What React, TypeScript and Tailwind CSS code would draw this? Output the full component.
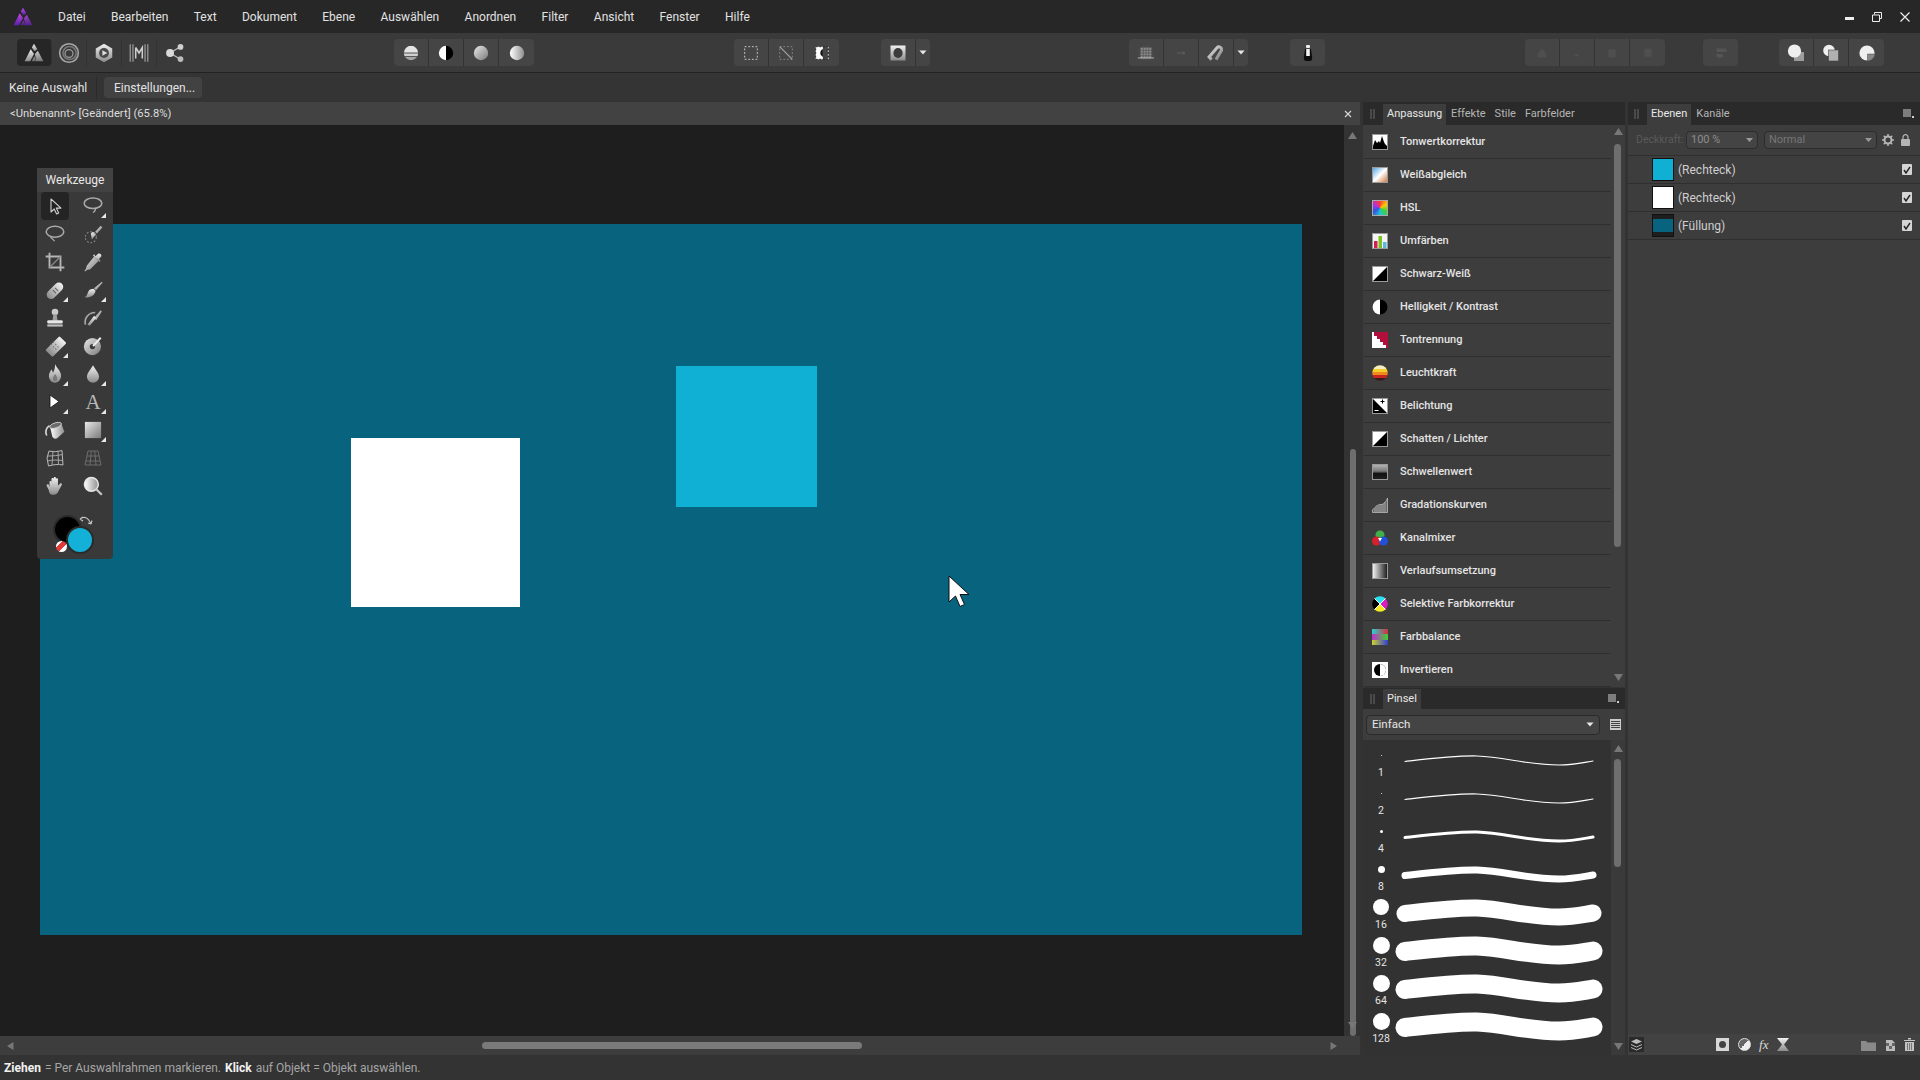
import React from 'react';

type Kids = { children?: React.ReactNode };

const Ico = ({ s = 20, children }: Kids & { s?: number }) => (
  <svg width={s} height={s} viewBox="0 0 20 20" className="block">
    {children}
  </svg>
);

const Sq = ({ children }: Kids) => (
  <svg width="16" height="16" viewBox="0 0 16 16" className="block">
    {children}
  </svg>
);

const Defs = () => (
  <svg className="absolute w-0 h-0">
    <defs>
      <linearGradient id="gv" x1="0" y1="0" x2="0" y2="1">
        <stop offset="0" stopColor="#f2f2f2" />
        <stop offset="1" stopColor="#8a8a8a" />
      </linearGradient>
      <linearGradient id="gd" x1="0" y1="0" x2="1" y2="1">
        <stop offset="0" stopColor="#e8e8e8" />
        <stop offset="1" stopColor="#7a7a7a" />
      </linearGradient>
      <linearGradient id="gh" x1="0" y1="0" x2="1" y2="0">
        <stop offset="0" stopColor="#ffffff" />
        <stop offset="1" stopColor="#8f8f8f" />
      </linearGradient>
      <linearGradient id="wb" x1="0" y1="0" x2="1" y2="1">
        <stop offset="0" stopColor="#3d9be0" />
        <stop offset="0.5" stopColor="#ffffff" />
        <stop offset="1" stopColor="#c96a28" />
      </linearGradient>
      <linearGradient id="bw" x1="0" y1="0" x2="1" y2="0">
        <stop offset="0" stopColor="#ffffff" />
        <stop offset="1" stopColor="#111111" />
      </linearGradient>
      <linearGradient id="th" x1="0" y1="0" x2="0" y2="1">
        <stop offset="0" stopColor="#bdbdbd" />
        <stop offset="0.45" stopColor="#777777" />
        <stop offset="0.6" stopColor="#111111" />
        <stop offset="1" stopColor="#222222" />
      </linearGradient>
      <linearGradient id="pu" x1="0" y1="0" x2="0" y2="1">
        <stop offset="0" stopColor="#c04be8" />
        <stop offset="1" stopColor="#5a1fa8" />
      </linearGradient>
    </defs>
  </svg>
);

// top toolbar ------------------------------------------------------------

const Btn = ({ children, w = 35, on }: Kids & { w?: number; on?: boolean }) => (
  <div
    className={`flex items-center justify-center h-[27px] border-r border-[#333] last:border-r-0 ${on ? 'bg-[#262626] rounded-sm' : ''}`}
    style={{ width: w }}
  >
    {children}
  </div>
);

const Group = ({ ml, children, plain }: Kids & { ml: number; plain?: boolean }) => (
  <div className={`flex rounded-sm ${plain ? '' : 'bg-[#454545]'}`} style={{ marginLeft: ml }}>
    {children}
  </div>
);

const Caret = () => (
  <svg width="8" height="5" viewBox="0 0 8 5">
    <path d="M0.5 0.5h7L4 4.5z" fill="#e6e6e6" />
  </svg>
);

const AffinityMark = ({ fill }: { fill: string }) => (
  <Ico s={22}>
    <path d="M10 1.5 13 6.5 10.5 8.5 8 5z" fill={fill} />
    <path d="M7 6.5 10 11 6.5 17.5H1.5z" fill={fill} />
    <path d="M13.5 8 18.5 17.5H12L10.8 11z" fill={fill} opacity="0.8" />
    <path d="M7.8 17.5 10.3 13 12 17.5z" fill={fill} opacity="0.6" />
  </Ico>
);

const TopBar = () => (
  <div className="flex items-center h-[40px] bg-[#3a3a3a] border-b border-[#222] shrink-0">
    <div className="flex ml-[17px] w-[180px]">
      <Btn on><AffinityMark fill="url(#gv)" /></Btn>
      <Btn>
        <Ico s={22}>
          <circle cx="10" cy="10" r="8.5" fill="none" stroke="#a8a8a8" strokeWidth="1.4" />
          <circle cx="10.5" cy="10" r="6" fill="none" stroke="#777" strokeWidth="1.4" />
          <circle cx="10" cy="10.5" r="3.6" fill="none" stroke="#999" strokeWidth="1.2" />
        </Ico>
      </Btn>
      <Btn>
        <Ico s={22}>
          <path d="M10 1.5 17.5 5.8V14.2L10 18.5 2.5 14.2V5.8z" fill="url(#gv)" />
          <circle cx="10" cy="10" r="4.5" fill="#4a4a4a" />
          <path d="M8.5 7.5 13 10 8.5 12.5z" fill="#ddd" />
        </Ico>
      </Btn>
      <Btn>
        <Ico s={22}>
          <path d="M2 2v16M4.5 2v16M15.5 2v16M18 2v16" stroke="#a5a5a5" strokeWidth="1" />
          <path d="M7 5 10 10 13 5v10M7 5v10" fill="none" stroke="#cfcfcf" strokeWidth="1.4" />
        </Ico>
      </Btn>
      <Btn>
        <Ico s={22}>
          <path d="M5.5 10 14.5 4.5M5.5 10 14.5 15.5" stroke="#bbb" strokeWidth="1.2" />
          <circle cx="5.5" cy="10" r="3.6" fill="#d9d9d9" />
          <circle cx="15" cy="4.5" r="2.6" fill="#cfcfcf" />
          <circle cx="15" cy="15.5" r="2.6" fill="#bdbdbd" />
        </Ico>
      </Btn>
    </div>
    <Group ml={197}>
      <Btn>
        <Ico s={18}>
          <clipPath id="c1"><circle cx="10" cy="10" r="8" /></clipPath>
          <g clipPath="url(#c1)">
            <rect width="20" height="7.5" y="2" fill="#e4e4e4" />
            <rect width="20" height="3" y="10.5" fill="#d0d0d0" />
            <rect width="20" height="4" y="14.5" fill="#a8a8a8" />
          </g>
        </Ico>
      </Btn>
      <Btn>
        <Ico s={18}>
          <circle cx="10" cy="10" r="8" fill="#000" />
          <path d="M10 2a8 8 0 0 0 0 16z" fill="#fff" />
        </Ico>
      </Btn>
      <Btn>
        <Ico s={18}><circle cx="10" cy="10" r="8" fill="url(#gd)" /></Ico>
      </Btn>
      <Btn>
        <Ico s={18}><circle cx="10" cy="10" r="8" fill="url(#gh)" /></Ico>
      </Btn>
    </Group>
    <Group ml={200}>
      <Btn>
        <Ico s={18}><rect x="3" y="3" width="14" height="14" fill="none" stroke="#d8d8d8" strokeDasharray="2 2" /></Ico>
      </Btn>
      <Btn>
        <Ico s={18}>
          <rect x="3" y="3" width="14" height="14" fill="none" stroke="#8a8a8a" strokeDasharray="2 2" />
          <path d="M3 3 17 17" stroke="#a5a5a5" strokeWidth="1.3" />
        </Ico>
      </Btn>
      <Btn>
        <Ico s={18}>
          <rect x="3" y="3" width="8" height="14" fill="#fff" />
          <rect x="3" y="3" width="14" height="14" fill="none" stroke="#1f1f1f" strokeDasharray="2 2" />
          <path d="M11 5.5a5 5 0 0 0-3 4.5 5 5 0 0 0 3 4.5z" fill="#111" />
          <path d="M17 3v14" stroke="#ddd" strokeDasharray="2 2" />
        </Ico>
      </Btn>
    </Group>
    <Group ml={42}>
      <Btn>
        <Ico s={20}>
          <rect x="2.5" y="2.5" width="15" height="15" fill="url(#gv)" />
          <ellipse cx="10" cy="10" rx="4.6" ry="5" fill="#3c3c3c" />
        </Ico>
      </Btn>
      <Btn w={14}><Caret /></Btn>
    </Group>
    <Group ml={199}>
      <Btn>
        <Ico s={18}>
          <rect x="4" y="4" width="12" height="12" fill="#8b8b8b" />
          <path d="M7 1.5v17M10 1.5v17M13 1.5v17M1.5 7h17M1.5 10h17M1.5 13h17" stroke="#555" strokeWidth="0.8" />
          <path d="M1 15.5h18" stroke="#bbb" />
        </Ico>
      </Btn>
      <Btn>
        <Ico s={16}><path d="M5 10h10M12 8l3 2-3 2" fill="none" stroke="#5e5e5e" strokeWidth="1.2" /></Ico>
      </Btn>
      <Btn>
        <Ico s={22}>
          <path d="M6 16 3.8 13.6 11 5.2c1.5-1.7 4.5-.2 4 2.4L10 16" fill="none" stroke="url(#gd)" strokeWidth="2.8" />
        </Ico>
      </Btn>
      <Btn w={14}><Caret /></Btn>
    </Group>
    <Group ml={42}>
      <Btn>
        <Ico s={20}>
          <path d="M7 6h6l1.2 9c0 2-1.2 3-2.2 3H8c-1 0-2.2-1-2.2-3z" fill="#0c0c0c" />
          <rect x="8" y="2" width="4" height="3" rx="1" fill="#eee" />
          <rect x="8.2" y="6" width="3.6" height="7" fill="#f2f2f2" />
        </Ico>
      </Btn>
    </Group>
    <Group ml={200}>
      {[
        'M10 5l5 6v4H5v-4z',
        'M12 6v8H6l3-3h3z',
        'M6 6h8v9H6z',
        'M6 5h8v9H6z',
      ].map((d) => (
        <Btn key={d}>
          <Ico s={18}><path d={d} fill="#4f4f4f" /></Ico>
        </Btn>
      ))}
    </Group>
    <Group ml={38}>
      <Btn>
        <Ico s={18}><path d="M5 5h11v4H5zM5 11h7v4H5z" fill="#555" /></Ico>
      </Btn>
    </Group>
    <Group ml={41}>
      <Btn>
        <Ico s={20}>
          <rect x="8" y="9" width="10" height="9" fill="#9c9c9c" />
          <circle cx="8.5" cy="8" r="6.6" fill="#efefef" />
        </Ico>
      </Btn>
      <Btn>
        <Ico s={20}>
          <circle cx="8" cy="7.5" r="5.8" fill="#efefef" />
          <rect x="7.5" y="7" width="10" height="11" fill="#b0b0b0" stroke="#444" strokeWidth="0.6" />
        </Ico>
      </Btn>
      <Btn>
        <Ico s={20}>
          <circle cx="10" cy="10" r="7.6" fill="#efefef" />
          <path d="M10.5 11H18c-.3 3.8-3.3 6.8-7.5 7z" fill="#888" stroke="#444" strokeWidth="0.5" />
        </Ico>
      </Btn>
    </Group>
  </div>
);

// canvas -----------------------------------------------------------------

type ToolDef = { el: React.ReactNode; corner?: boolean; on?: boolean };

const tools: ToolDef[] = [
  { on: true, el: <Ico><path d="M6 3v13l3.2-3 2.4 5 2.1-1-2.4-4.9H16z" fill="#222" stroke="#cfcfcf" strokeWidth="1.1" strokeLinejoin="round" /></Ico> },
  { corner: true, el: <Ico s={22}><ellipse cx="10" cy="7.5" rx="8" ry="4.8" fill="none" stroke="#a9a9a9" strokeWidth="1.4" /><path d="M12 12c1 2-1 3-2 4" fill="none" stroke="#a9a9a9" strokeWidth="1.2" /></Ico> },
  { el: <Ico s={22}><ellipse cx="10" cy="8" rx="8" ry="5" fill="none" stroke="#a9a9a9" strokeWidth="1.4" /><path d="M6 12.5c.5 2 2.5 2 3.5 4" fill="none" stroke="#a9a9a9" strokeWidth="1.2" /></Ico> },
  { el: <Ico s={22}><path d="M12 8 17 2.5l1.5 1.5-5 5.5z" fill="url(#gd)" /><path d="M8 9.5c2-2 4-1.5 4.5 1L9 15z" fill="url(#gv)" /><circle cx="8" cy="13" r="5" fill="none" stroke="#888" strokeDasharray="1.6 1.6" /></Ico> },
  { el: <Ico s={22}><path d="M5 1.5V15h13.5M1.5 5H15v13.5" fill="none" stroke="#b5b5b5" strokeWidth="1.7" /><path d="M5 15 15 5" stroke="#8a8a8a" strokeWidth="1.1" /></Ico> },
  { el: <Ico s={22}><path d="M11 5l4 4-7.5 7.5-3 .8-1.6 1.3-.7-.7 1.3-1.6.8-3z" fill="url(#gd)" /><path d="M10 4l6 6 1-1-1.6-1.6 2-2.4c1-1.5-1.4-3.6-3-2.2l-2.2 2L11 3z" fill="url(#gv)" /></Ico> },
  { corner: true, el: <Ico s={22}><rect x="0" y="0" width="8" height="18" rx="4" transform="translate(13.5 1.5) rotate(45)" fill="url(#gv)" /><path d="M8 10l3 3M10 8l3 3" stroke="#666" /></Ico> },
  { corner: true, el: <Ico s={22}><path d="M11 8.5 18 2.5l.7.8-6 7z" fill="url(#gd)" /><path d="M10.5 8.8l1.8 1.8c-.6 4.2-5 6.8-10.3 6 3-1 2.8-3.6 4-5.7 1-1.5 2.6-2 4.5-2.1z" fill="url(#gv)" /></Ico> },
  { el: <Ico s={22}><circle cx="10" cy="4.5" r="3" fill="#c9c9c9" /><path d="M8.5 6.5h3l.8 6h-4.6z" fill="#9e9e9e" /><rect x="3" y="12" width="14" height="3" rx="1" fill="#e6e6e6" /><rect x="3" y="15.8" width="14" height="2" fill="#bdbdbd" /></Ico> },
  { el: <Ico s={22}><path d="M3 16c-1-6 3-11 9-11" fill="none" stroke="#a8a8a8" strokeWidth="1.5" /><path d="M11 10l6-7 1 1-5 8z" fill="url(#gd)" /><path d="M5 16l6-8 2 2-6 7z" fill="url(#gv)" /></Ico> },
  { corner: true, el: <Ico s={22}><rect x="0" y="0" width="9" height="18" rx="1" transform="translate(14 1) rotate(45)" fill="url(#gv)" /><path d="M6 8l6 6M8 6l6 6" stroke="#777" strokeDasharray="1.5 1.5" /></Ico> },
  { el: <Ico s={22}><circle cx="9.500" cy="10.500" r="7.800" fill="url(#gd)" /><circle cx="9.500" cy="10.500" r="2.400" fill="#3a3a3a" /><path d="M10 10l7-7.500" stroke="#ededed" strokeWidth="1.800" /></Ico> },
  { corner: true, el: <Ico s={22}><path d="M10 1c1 3 5 5.500 5.500 10 .3 4-2.500 7-5.500 7S4 15 4.500 11c.2-2 1.500-3 2-5 1 .8 1.500 2 1.500 3 1.500-2 2.300-5 2-8z" fill="url(#gv)" /><path d="M10 10c1.500 2 2.500 3.500 1.800 5.500-.5 1.200-3 1.200-3.600 0C7.500 13.500 9 12 10 10z" fill="#7a7a7a" /></Ico> },
  { corner: true, el: <Ico s={22}><path d="M10 2c2 4 5.500 7 5.500 10.500A5.500 5.500 0 0 1 10 18a5.500 5.500 0 0 1-5.500-5.500C4.500 9 8 6 10 2z" fill="url(#gv)" /></Ico> },
  { corner: true, el: <Ico><path d="M5 3v13l9-6.500z" fill="#fff" stroke="#111" strokeWidth="0.800" /></Ico> },
  { corner: true, el: <span className="block text-[21px] leading-[20px] text-[#b8b8b8] font-['Liberation_Serif',serif]">A</span> },
  { el: <Ico s={22}><path d="M5.500 7 15.500 3.500 18.500 11.500 12 17.500c-2 1-3.800.2-4.500-1.800z" fill="url(#gh)" /><ellipse cx="10.500" cy="5.800" rx="5.500" ry="2.300" transform="rotate(-18 10.500 5.800)" fill="#6a6a6a" stroke="#ddd" strokeWidth="0.700" /><path d="M5 6c-3.500 2-4 6-2.500 9" fill="none" stroke="#ddd" strokeWidth="1.500" /></Ico> },
  { corner: true, el: <Ico s={18}><rect x="1" y="1" width="18" height="18" fill="url(#gd)" /></Ico> },
  { el: <Ico s={20}><path d="M4 3c4 1 8 1 13-.5l1 14.500c-5-1-9-.5-14.500 1L2 10z" fill="none" stroke="#b9b9b9" /><path d="M3 8c5 0 10-.5 14.500-1.500M2.500 13c5-1.500 10-1 15.500-.5M8 2.800 7 17M13 2.500l.5 14.500" fill="none" stroke="#a5a5a5" /></Ico> },
  { el: <Ico s={20}><path d="M5 3h10l3 14H2zM3.800 8h12.400M2.800 13h14.400M8.300 3 7 17M11.700 3 13 17" fill="none" stroke="#6c6c6c" /></Ico> },
  { el: <Ico s={22}><path d="M5 11V6.500c0-1.300 1.800-1.300 1.800 0V3.800c0-1.300 2-1.300 2 0v-1c0-1.300 2-1.300 2 0v1c0-1.200 1.900-1.200 1.900 0v6l1.800-1.800c1-1 2.300 0 1.600 1L12.500 16c-1 1.500-2 2-4 2-3 0-4-2-4-4L2.500 10c-.7-1.400 1-2.200 1.800-1.200z" fill="url(#gv)" /></Ico> },
  { el: <Ico s={22}><circle cx="8.500" cy="8.500" r="6.300" fill="url(#gh)" stroke="#e6e6e6" strokeWidth="1.400" /><path d="M13 13l5 5" stroke="#c8c8c8" strokeWidth="2" /></Ico> },
];

const ToolsPanel = () => (
  <div className="absolute left-[37px] top-[43px] w-[76px] h-[391px] bg-[#393939] rounded-b-sm z-10">
    <div className="h-[24px] flex items-center justify-center bg-[#424242] text-[12px] text-[#e8e8e8]">Werkzeuge</div>
    <div className="grid grid-cols-[28px_28px] gap-x-[10px] pl-[4px]">
      {tools.map((t, i) => (
        <div key={i} className={`relative flex items-center justify-center w-[28px] h-[28px] rounded-sm ${t.on ? 'bg-[#242424]' : ''}`}>
          {t.el}
          {t.corner && <div className="absolute right-[1px] bottom-[2px] w-0 h-0 border-l-[5px] border-l-transparent border-b-[5px] border-b-[#e8e8e8]" />}
        </div>
      ))}
    </div>
    <div className="relative h-[60px]">
      <div className="absolute left-[16px] top-[15px] w-[29px] h-[29px] rounded-full bg-black border-2 border-[#2b2b2b]" />
      <div className="absolute left-[29px] top-[26px] w-[28px] h-[28px] rounded-full bg-[#13b1d8] border-2 border-[#2b2b2b]" />
      <div className="absolute left-[19px] top-[41px] w-[11px] h-[11px] rounded-full bg-[linear-gradient(135deg,#fff_30%,#e03a3a_30%,#e03a3a_60%,#fff_60%)]" />
      <svg className="absolute left-[42px] top-[15px]" width="14" height="14" viewBox="0 0 14 14">
        <path d="M1 4c4-3 8-2 11 5M1 4l3-2M1 4l3 2M12 9l1-3.500M12 9l-3-1" fill="none" stroke="#c8c8c8" strokeWidth="1.100" />
      </svg>
    </div>
  </div>
);

const DocCanvas = () => (
  <div className="relative flex-1 bg-[#1e1e1e] overflow-hidden">
    <div className="absolute left-[40px] top-[99px] w-[1262px] h-[711px] bg-[#07637e]" />
    <div className="absolute left-[351px] top-[313px] w-[169px] h-[169px] bg-white" />
    <div className="absolute left-[676px] top-[241px] w-[141px] h-[141px] bg-[#10b0d4]" />
    <ToolsPanel />
    <svg className="absolute left-[947px] top-[450px]" width="24" height="34" viewBox="0 0 24 34">
      <path d="M2 1v26l6.500-6 4.500 10.500 4.500-2L13 19.500h9z" fill="#fff" stroke="#111" strokeWidth="1" />
    </svg>
  </div>
);

const ScrollArrow = ({ up, cls }: { up?: boolean; cls?: string }) => (
  <svg className={cls} width="9" height="7" viewBox="0 0 9 7">
    <path d={up ? 'M0 7h9L4.500 0z' : 'M0 0h9L4.500 7z'} fill="#777" />
  </svg>
);

const DocArea = () => (
  <div className="flex flex-col w-[1360px] shrink-0">
    <div className="flex items-center h-[23px] bg-[#424242] pl-[10px] pr-[8px] justify-between">
      <span className="pt-[1px] text-[11.25px] text-[#dcdcdc]">&lt;Unbenannt&gt; [Geändert] (65.8%)</span>
      <svg width="8" height="8" viewBox="0 0 8 8"><path d="M1 1l6 6M7 1 1 7" stroke="#d8d8d8" strokeWidth="1.100" /></svg>
    </div>
    <div className="flex flex-1">
      <div className="flex flex-col flex-1">
        <DocCanvas />
      </div>
      <div className="relative w-[16px] bg-[#333]">
        <ScrollArrow up cls="absolute left-[4px] top-[7px]" />
        <div className="absolute left-[6px] top-[324px] w-[6px] h-[587px] rounded bg-[#6e6e6e]" />
        <ScrollArrow cls="absolute left-[4px] bottom-[7px]" />
      </div>
    </div>
    <div className="relative h-[19px] bg-[#3d3d3d]">
      <svg className="absolute left-[7px] top-[6px]" width="7" height="8" viewBox="0 0 7 8"><path d="M6.500 0v8L0 4z" fill="#777" /></svg>
      <div className="absolute left-[482px] top-[6px] w-[380px] h-[7px] rounded-full bg-[#7a7a7a]" />
      <svg className="absolute left-[1330px] top-[6px]" width="7" height="8" viewBox="0 0 7 8"><path d="M.5 0v8L7 4z" fill="#777" /></svg>
    </div>
  </div>
);

// adjustments ------------------------------------------------------------

const Frame = ({ children }: Kids) => (
  <>
    {children}
    <rect x="0.5" y="0.5" width="15" height="15" fill="none" stroke="#9a9a9a" />
  </>
);

const adjustments: { name: string; icon: React.ReactNode }[] = [
  { name: 'Tonwertkorrektur', icon: <Sq><Frame><rect width="16" height="16" fill="#fff" /><path d="M1 15V12l2-6 2 3 2-2 1 2 2-7 2 6 1 2 2 2v3z" fill="#000" /></Frame></Sq> },
  { name: 'Weißabgleich', icon: <Sq><Frame><rect width="16" height="16" fill="url(#wb)" /></Frame></Sq> },
  { name: 'HSL', icon: <div className="w-4 h-4 border border-[#aaa] bg-[conic-gradient(#ff3b30,#ffcc00,#3bd33b,#22c4d8,#2f55e0,#b52fe0,#ff3b30)]" /> },
  { name: 'Umfärben', icon: <Sq><Frame><rect width="16" height="16" fill="#f4f4f4" /><rect x="2" y="8" width="3.500" height="7" fill="#d21f4f" /><rect x="6.500" y="3" width="3.500" height="12" fill="#7ac21e" /><rect x="11" y="9" width="3.500" height="6" fill="#5ab7e0" /></Frame></Sq> },
  { name: 'Schwarz-Weiß', icon: <Sq><Frame><rect width="16" height="16" fill="#fff" /><path d="M16 0v16H0z" fill="#000" /></Frame></Sq> },
  { name: 'Helligkeit / Kontrast', icon: <Sq><circle cx="8" cy="8" r="7.500" fill="#000" /><path d="M8 .5a7.500 7.500 0 0 0 0 15z" fill="#fff" /></Sq> },
  { name: 'Tontrennung', icon: <Sq><rect width="16" height="16" fill="#fff" /><path d="M0 0h16v16h-2v-3h-3v-3H8V7H5V4H2V0z" fill="#b20f3c" /></Sq> },
  { name: 'Leuchtkraft', icon: <Sq><clipPath id="lk"><circle cx="8" cy="8" r="7.800" /></clipPath><g clipPath="url(#lk)"><rect width="16" height="4" fill="#f6edc0" /><rect y="4" width="16" height="3" fill="#f4cf2b" /><rect y="7" width="16" height="3" fill="#ee8a1f" /><rect y="10" width="16" height="3" fill="#c9261e" /><rect y="13" width="16" height="3" fill="#3a1a1a" /></g></Sq> },
  { name: 'Belichtung', icon: <Sq><Frame><rect width="16" height="16" fill="#000" /><path d="M0 0h16v16z" fill="#fff" /><path d="M10.500 1.500v4M8.500 3.500h4" stroke="#000" /><path d="M2.500 12.500h4" stroke="#fff" /></Frame></Sq> },
  { name: 'Schatten / Lichter', icon: <Sq><Frame><rect width="16" height="16" fill="#fff" /><path d="M16 0v16H0z" fill="#000" /></Frame></Sq> },
  { name: 'Schwellenwert', icon: <Sq><Frame><rect width="16" height="16" fill="url(#th)" /></Frame></Sq> },
  { name: 'Gradationskurven', icon: <Sq><path d="M0.500 15.500V13C4 9 6 7.500 9 7.500c3 0 5-3 6.500-6.500V15.500z" fill="#666" stroke="#bdbdbd" strokeWidth="0.800" /><path d="M3 15V11M5 15V9.500M7 15V8.500M9 15V8M11 15V7M13 15V5" stroke="#bdbdbd" strokeWidth="0.700" /></Sq> },
  { name: 'Kanalmixer', icon: <Sq><circle cx="8" cy="5" r="4.500" fill="#3fb04a" /><circle cx="4.500" cy="11" r="4.500" fill="#d8202a" /><circle cx="11.500" cy="11" r="4.500" fill="#2350d8" /><path d="M6 8h4l-2 3.500z" fill="#fff" /></Sq> },
  { name: 'Verlaufsumsetzung', icon: <Sq><Frame><rect width="16" height="16" fill="url(#bw)" /></Frame></Sq> },
  { name: 'Selektive Farbkorrektur', icon: <Sq><clipPath id="sf"><circle cx="8" cy="8" r="7.800" /></clipPath><g clipPath="url(#sf)"><path d="M0 0h16L8 8z" fill="#28e2ee" /><path d="M16 0v16L8 8z" fill="#d51fc0" /><path d="M16 16H0l8-8z" fill="#f5ea1f" /><path d="M0 16V0l8 8z" fill="#000" /><path d="M2 2l12 12M14 2 2 14" stroke="#fff" strokeWidth="1" /></g></Sq> },
  { name: 'Farbbalance', icon: <div className="w-4 h-4 flex flex-col"><div className="h-[5px] bg-[linear-gradient(90deg,#2fd0d0,#d02f3f)]" /><div className="h-[6px] bg-[linear-gradient(90deg,#c02fd0,#3fd02f)]" /><div className="h-[5px] bg-[linear-gradient(90deg,#d0d02f,#2f3fd0)]" /></div> },
  { name: 'Invertieren', icon: <Sq><rect width="16" height="16" fill="#fff" /><circle cx="8" cy="8" r="6" fill="#000" /><path d="M8 2a6 6 0 0 1 0 12z" fill="#fff" /></Sq> },
];

const Tab = ({ on, children }: Kids & { on?: boolean }) => (
  <div className={`flex items-center h-[21px] mt-[2px] px-[4px] text-[11px] ${on ? 'bg-[#3d3d3d] text-[#e8e8e8]' : 'text-[#b5b5b5]'}`}>
    {children}
  </div>
);

const Grip = () => (
  <svg className="mx-[5px] shrink-0" width="5" height="10" viewBox="0 0 5 10">
    <path d="M1 0v10M4 0v10" stroke="#6a6a6a" />
  </svg>
);

const MenuIcon = () => (
  <svg width="11" height="9" viewBox="0 0 11 9">
    <path d="M0 1h8M0 3h8M0 5h8M0 7h8" stroke="#d0d0d0" />
    <path d="M9 7h2v2H9z" fill="#d0d0d0" />
  </svg>
);

const AdjustPanel = () => (
  <div className="flex flex-col h-[584px] shrink-0">
    <div className="flex items-center h-[23px] bg-[#2a2a2a] pl-[2px] shrink-0">
      <Grip />
      <div className="flex gap-[1px] ml-[3px]">
        <Tab on>Anpassung</Tab>
        <Tab>Effekte</Tab>
        <Tab>Stile</Tab>
        <Tab>Farbfelder</Tab>
      </div>
    </div>
    <div className="flex flex-1 bg-[#3d3d3d]">
      <div className="flex-1 pt-[1px]">
        {adjustments.map((a) => (
          <div key={a.name} className="flex items-center h-[33px] border-b border-[#2f2f2f] ml-[1px] pl-[8px]">
            <div className="w-[16px] h-[16px] shrink-0">{a.icon}</div>
            <span className="ml-[12px] text-[11px] font-medium text-[#e4e4e4]">{a.name}</span>
          </div>
        ))}
      </div>
      <div className="relative w-[14px]">
        <ScrollArrow up cls="absolute left-[3px] top-[3px]" />
        <div className="absolute left-[3px] top-[19px] w-[7px] h-[403px] rounded bg-[#6e6e6e]" />
        <ScrollArrow cls="absolute left-[3px] bottom-[6px]" />
      </div>
    </div>
  </div>
);

// brushes ----------------------------------------------------------------

const brushes: [string, number, number][] = [
  ['1', 1, 1.200],
  ['2', 1, 1.200],
  ['4', 3, 3],
  ['8', 7, 7],
  ['16', 16, 17],
  ['32', 17, 19],
  ['64', 17, 19],
  ['128', 17, 19],
];

const BrushPanel = () => (
  <div className="flex flex-col flex-1 mt-[2px] min-h-0">
    <div className="flex items-center justify-between h-[21px] bg-[#2a2a2a] pl-[2px] pr-[6px] shrink-0">
      <div className="flex items-center">
        <Grip />
        <div className="ml-[3px]"><Tab on>Pinsel</Tab></div>
      </div>
      <MenuIcon />
    </div>
    <div className="flex items-center h-[31px] bg-[#3d3d3d] pl-[3px] pr-[2px] shrink-0">
      <div className="flex items-center justify-between w-[234px] h-[20px] px-[5px] bg-[#444] border border-[#2a2a2a] rounded-sm text-[11.5px] text-[#e6e6e6]">
        <span>Einfach</span>
        <Caret />
      </div>
      <div className="ml-[10px] w-[11px] h-[11px] border border-[#ccc] bg-[repeating-linear-gradient(180deg,#ccc_0,#ccc_1px,#444_1px,#444_2px)]" />
    </div>
    <div className="flex flex-1 bg-[#323232]">
      <div className="flex-1">
        {brushes.map(([label, dot, sw]) => (
          <div key={label} className="relative flex h-[38px]">
            <div className="w-[36px] flex flex-col items-center pt-[2px]">
              <div className="h-[26px] flex items-center justify-center">
                <div className="rounded-full bg-white" style={{ width: dot, height: dot }} />
              </div>
              <div className="h-[10px] leading-[10px] text-[10.5px] text-[#e4e4e4]">{label}</div>
            </div>
            <svg width="210" height="38" viewBox="0 0 210 38" className="absolute left-[30px] top-[0px]">
              <path
                d="M12 21.500C38 18.500 62 15.500 84 16c28 1 50 9 82 9 14 0 22-2 34-4"
                fill="none"
                stroke="#fff"
                strokeWidth={sw}
                strokeLinecap="round"
              />
            </svg>
          </div>
        ))}
      </div>
      <div className="relative w-[14px] bg-[#3a3a3a]">
        <ScrollArrow up cls="absolute left-[3px] top-[5px]" />
        <div className="absolute left-[3px] top-[19px] w-[7px] h-[108px] rounded bg-[#6e6e6e]" />
        <ScrollArrow cls="absolute left-[3px] bottom-[5px]" />
      </div>
    </div>
  </div>
);

// layers -----------------------------------------------------------------

const Check = () => (
  <div className="flex items-center justify-center w-[10px] h-[11px] bg-[#d4d4d4] rounded-[1px]">
    <svg width="8" height="8" viewBox="0 0 8 8"><path d="M1 4l2 3 4-6" fill="none" stroke="#222" strokeWidth="1.400" /></svg>
  </div>
);

const LayerRow = ({ name, swatch }: { name: string; swatch: React.ReactNode }) => (
  <div className="flex items-center h-[28px] border-b border-[#2f2f2f] pl-[24px] pr-[8px]">
    <div className="w-[22px] h-[23px] border border-[#111] shrink-0 overflow-hidden">{swatch}</div>
    <span className="ml-[4px] flex-1 text-[12px] text-[#cfcfcf]">{name}</span>
    <Check />
  </div>
);

const LayersPanel = () => (
  <div className="flex flex-col flex-1 ml-[3px] bg-[#3d3d3d]">
    <div className="flex items-center justify-between h-[23px] bg-[#2a2a2a] pl-[1px] pr-[6px] shrink-0">
      <div className="flex items-center">
        <Grip />
        <div className="flex gap-[1px] ml-[3px]">
          <Tab on>Ebenen</Tab>
          <Tab>Kanäle</Tab>
        </div>
      </div>
      <MenuIcon />
    </div>
    <div className="flex items-center h-[31px] pl-[8px] border-b border-[#2f2f2f]">
      <span className="w-[50px] text-[10.5px] text-[#5a5a5a]">Deckkraft:</span>
      <div className="flex items-center justify-between w-[72px] h-[18px] px-[4px] bg-[#444] border border-[#2c2c2c] rounded-sm text-[11px] text-[#8c8c8c]">
        <span>100 %</span>
        <svg width="7" height="4" viewBox="0 0 7 4"><path d="M0 0h7L3.500 4z" fill="#999" /></svg>
      </div>
      <div className="flex items-center justify-between w-[113px] h-[18px] ml-[6px] px-[4px] bg-[#444] border border-[#2c2c2c] rounded-sm text-[11px] text-[#777]">
        <span>Normal</span>
        <svg width="7" height="4" viewBox="0 0 7 4"><path d="M0 0h7L3.500 4z" fill="#999" /></svg>
      </div>
      <svg className="ml-[5px]" width="12" height="12" viewBox="0 0 12 12">
        <circle cx="6" cy="6" r="3.500" fill="none" stroke="#b5b5b5" strokeWidth="2" />
        <path d="M6 0v2.500M6 9.500V12M0 6h2.500M9.500 6H12M1.800 1.800l1.800 1.800M8.400 8.400l1.800 1.800M1.800 10.200l1.800-1.800M8.400 3.600l1.800-1.800" stroke="#b5b5b5" strokeWidth="1.500" />
      </svg>
      <svg className="ml-[7px]" width="9" height="12" viewBox="0 0 9 12">
        <path d="M2 5V3.200a2.500 2.500 0 0 1 5 0V5" fill="none" stroke="#b5b5b5" strokeWidth="1.200" />
        <rect y="5" width="9" height="7" rx="1" fill="#b5b5b5" />
      </svg>
    </div>
    <LayerRow name="(Rechteck)" swatch={<div className="w-full h-full bg-[#10b0d4]" />} />
    <LayerRow name="(Rechteck)" swatch={<div className="w-full h-full bg-white" />} />
    <LayerRow
      name="(Füllung)"
      swatch={
        <div className="w-full h-full bg-[#1e1e1e] flex items-center">
          <div className="w-full h-[13px] bg-[#07637e]" />
        </div>
      }
    />
    <div className="flex-1" />
    <div className="flex items-center h-[21px] bg-[#424242] pl-[1px] pr-[5px]">
      <div className="w-[15px] h-[15px] bg-[#2a2a2a] flex items-center justify-center">
        <svg width="13" height="13" viewBox="0 0 13 13">
          <path d="M6.500 1 12 3.500 6.500 6 1 3.500z" fill="#bbb" />
          <path d="M1 6.500 6.500 9 12 6.500M1 9.500 6.500 12 12 9.500" fill="none" stroke="#bbb" />
        </svg>
      </div>
      <div className="ml-[72px] flex items-center w-[73px] justify-between">
        <div className="w-[13px] h-[13px] bg-[#d8d8d8] flex items-center justify-center"><div className="w-[7px] h-[7px] rounded-full bg-[#444]" /></div>
        <div className="w-[13px] h-[13px] rounded-full border border-[#ddd] bg-[linear-gradient(135deg,#666_50%,#eee_50%)]" />
        <span className="text-[13px] italic leading-none text-[#ddd] font-['Liberation_Serif',serif]">fx</span>
        <svg width="12" height="13" viewBox="0 0 12 13"><path d="M0 0h12L7 6.500 12 13H0l5-6.500z" fill="url(#gv)" /></svg>
      </div>
      <div className="ml-auto flex items-center gap-[8px]">
        <svg width="15" height="12" viewBox="0 0 15 12"><path d="M0 2h5l1.500 1.500H15V12H0z" fill="#8a8a8a" /></svg>
        <svg width="12" height="13" viewBox="0 0 12 13"><path d="M2 2h6l3 3v8H2z" fill="#bbb" /><path d="M2 5h3v3H2zM5 8h3v3H5zM8 5h3v3H8z" fill="#666" /></svg>
        <svg width="11" height="13" viewBox="0 0 11 13"><path d="M0 2h11v1H0zM4 0h3v1.500H4zM1 4h9v9H1z" fill="#c4c4c4" /><path d="M3.500 5v7M5.500 5v7M7.500 5v7" stroke="#555" strokeWidth="0.700" /></svg>
      </div>
    </div>
  </div>
);

// page -------------------------------------------------------------------

const menu = ['Datei', 'Bearbeiten', 'Text', 'Dokument', 'Ebene', 'Auswählen', 'Anordnen', 'Filter', 'Ansicht', 'Fenster', 'Hilfe'];

export default function App() {
  return (
    <div className="flex flex-col w-[1920px] h-[1080px] overflow-hidden bg-[#333] font-['Roboto',sans-serif] relative">
      <Defs />
      {/* menu bar */}
      <div className="flex items-center h-[33px] bg-[#272727] shrink-0">
        <div className="ml-[12px] w-[20px]"><AffinityMark fill="url(#pu)" /></div>
        <div className="flex gap-[25.4px] ml-[26px] pt-[1px] text-[12px] text-[#e2e2e2]">
          {menu.map((m) => <span key={m}>{m}</span>)}
        </div>
        <div className="flex items-center gap-[18px] ml-auto pr-[10px]">
          <div className="w-[9px] h-[3px] mt-[4px] bg-[#eee]" />
          <svg width="10" height="10" viewBox="0 0 10 10"><path d="M2.500 2.500V.5h7v6h-2M.5 3h7v6.500h-7z" fill="none" stroke="#eee" /></svg>
          <svg width="10" height="10" viewBox="0 0 10 10"><path d="M.5.5l9 9M9.500.5l-9 9" stroke="#eee" strokeWidth="1.200" /></svg>
        </div>
      </div>
      <TopBar />
      {/* context bar */}
      <div className="flex items-center h-[29px] bg-[#343434] shrink-0">
        <span className="ml-[9px] w-[87px] pt-[1px] text-[12px] text-[#e2e2e2]">Keine Auswahl</span>
        <div className="h-[22px] w-px bg-[#2a2a2a]" />
        <div className="flex items-center ml-[7px] h-[21px] px-[10px] w-[98px] pt-[1px] bg-[#424242] rounded-sm text-[12px] text-[#e2e2e2]">Einstellungen...</div>
      </div>
      <div className="flex flex-1 min-h-0">
        <DocArea />
        <div className="flex flex-col w-[262px] ml-[3px] shrink-0">
          <AdjustPanel />
          <BrushPanel />
        </div>
        <LayersPanel />
      </div>
      {/* status bar */}
      <div className="flex items-center h-[25px] bg-[#333] pl-[4px] text-[12px] text-[#a5a5a5] shrink-0">
        <b className="font-bold text-[#f2f2f2]">Ziehen</b>
        <span className="ml-[4px]">= Per Auswahlrahmen markieren.</span>
        <b className="ml-[4px] font-bold text-[#f2f2f2]">Klick</b>
        <span className="ml-[4px]">auf Objekt = Objekt auswählen.</span>
      </div>
    </div>
  );
}
